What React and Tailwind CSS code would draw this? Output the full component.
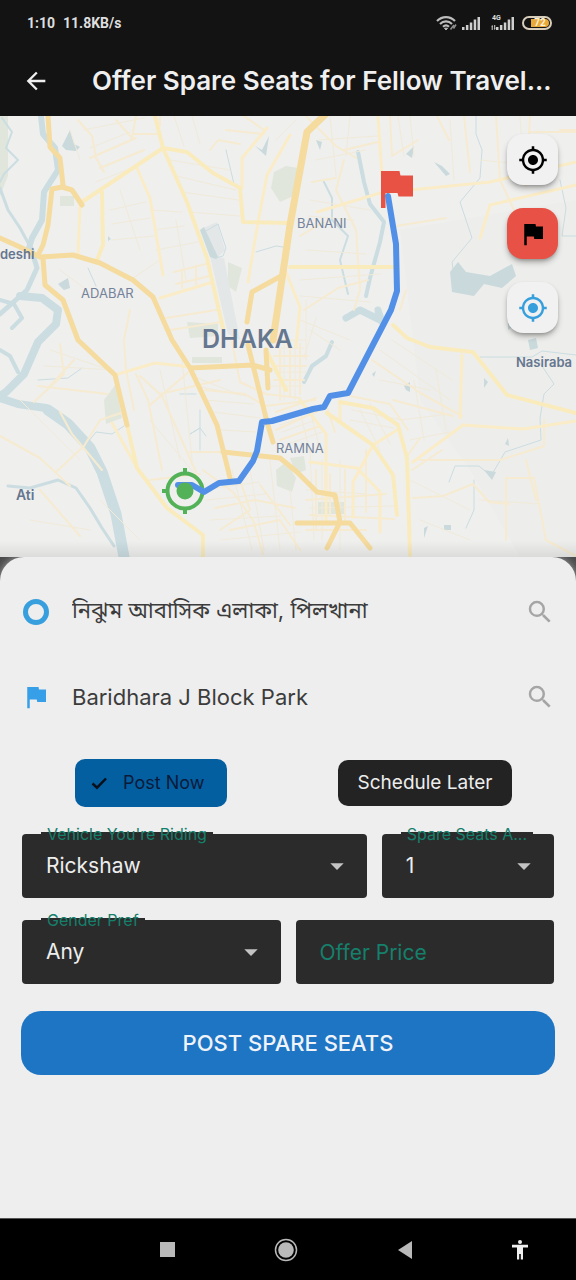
import React, { useState } from 'react';
import {
  MdAccessibility,
  MdArrowBack,
  MdArrowDropDown,
  MdFlag,
  MdMyLocation,
  MdSearch,
} from 'react-icons/md';

const SignalBars = () => (
  <svg viewBox="0 0 18 14" className="w-[18px] h-3.5" fill="#cfcfcf">
    <rect x="0" y="11" width="2.500" height="3" />
    <rect x="3.900" y="9" width="2.500" height="5" />
    <rect x="7.800" y="6.500" width="2.500" height="7.500" />
    <rect x="11.700" y="3.500" width="2.500" height="10.500" />
    <rect x="15.500" y="1" width="2.500" height="13" />
  </svg>
);

const StatusBar = () => (
  <div className="h-[45px] flex items-center justify-between pl-[27px] pr-6 text-[#dedede] font-[Roboto,sans-serif]">
    <div className="flex gap-2 text-sm font-bold">
      <span>1:10</span>
      <span>11.8KB/s</span>
    </div>
    <div className="flex items-center">
      {/* Wifi */}
      <svg viewBox="0 0 22 16" className="w-[22px] h-4" fill="none" stroke="#bdbdbd" strokeWidth="2.200">
        <path d="M1 6C6 .8 14 .8 19 6" />
        <path d="M4 9c3.400-3.400 8.600-3.400 12 0" />
        <path d="M7 11.800c1.800-1.600 4.200-1.600 6 0" />
        <path d="M8.500 13.200h3L10 15z" fill="#bdbdbd" strokeWidth="1" />
        <path d="M14.500 14.500l3.500-4.500M17.500 13.500l2.500-4" stroke="#8c8c8c" strokeWidth="1.600" />
      </svg>
      <div className="ml-1">
        <SignalBars />
      </div>
      <div className="relative ml-[11px] pl-[5px]">
        <SignalBars />
        <svg viewBox="0 0 5 5" className="absolute left-0 bottom-0 w-[5px] h-[5px]" fill="#cfcfcf">
          <path d="M1.200 0L2.200 1.500H1.700V5H.7V1.500H.2zM3.700 5L2.700 3.500h.5V0h1v3.500h.5z" />
        </svg>
        <span className="absolute left-px -top-0.5 text-[7px] leading-2 font-bold">4G</span>
      </div>
      <div className="ml-2 w-[30px] h-3.5 rounded-full border-2 border-[#d8cdbb] flex items-center p-px">
        <span className="ml-1.5 flex-1 h-full rounded-r-full bg-[#e9a83a] flex items-center justify-center text-[10px] font-bold text-[#fff1d2]">
          72
        </span>
      </div>
    </div>
  </div>
);

const CityMap = () => (
  <svg
    viewBox="0 116 576 441"
    preserveAspectRatio="xMidYMid slice"
    className="w-full h-full"
    fill="none"
    strokeLinecap="round"
    strokeLinejoin="round"
  >
    <rect x="0" y="0" width="576" height="700" fill="#efefee" />
    <path d="M400 230L576 200V557H520L470 470L420 400Z" fill="#ededeb" />

    {/* Parks */}
    <g fill="#e0e6dc">
      <path d="M274 172l12-6 12 2v26l-18 8-9-14z" />
      <path d="M187 322l31 2v12l-28 2zM192 357h30v6h-30zM60 196h14v10H60z" />
      <path d="M104 400l12-16 6 34-16 6zM276 470l10-8 10 16-4 14-15-6zM318 502h28v12h-28z" />
      <path d="M228 262l14 6-6 24-8-6zM290 458l14-2 2 14-10 4zM0 116h8v60l-8 20z" />
    </g>
    {/* Airfield */}
    <path d="M203 228l14-6 8 28-8 8zM210 256l14 2 16 82-12-6z" fill="#e3e7e7" />

    {/* Rivers */}
    <g stroke="#cbdde1">
      <path d="M41 116l2 18 12 14 3 22-14 22-2 28-10 18-3 10" strokeWidth="6" />
      <path d="M31 248l6 20-10 22-27 24" strokeWidth="5" />
      <path d="M20 296l22 2 16 12-2 14-18 18-14 32-18 18-6 4" strokeWidth="8" />
      <path d="M0 398l18 6 28 4 22 16 20 24" strokeWidth="8" />
      <path d="M48 410l20 14 22 24 12 24 14 42 8 43" strokeWidth="11" />
      <path d="M0 188l8 22 12 18 12 22" strokeWidth="3" />
      <path d="M0 300l14 4 8 14-10 10M0 350l10 6 8 16" strokeWidth="4" />
      <path d="M2 118l10 14-6 16 12 12-14 14-4 8" strokeWidth="2" />
      <path d="M8 486l22 2 28-8 18 8 14 20 12 20 12 18" strokeWidth="3" />
      <path d="M88 442l8-10 16 2 12-8M200 410v18l-10 6 10-6 6 8M200 428v22M180 394h16M38 380l30-2 14-10" strokeWidth="1" />
      <path d="M204 232l14-8 8 24-3 8-8 2M256 252l20-6 14 2M226 150l8 34M88 268l8 18" strokeWidth="1" />
      <path d="M358 152l6 30 6 22 14 18-4 20-10 36-4 18" strokeWidth="4" />
      <path d="M324 182l8 16v22l16 16-8 24 8 34M352 312l24 2" strokeWidth="2" />
      <path d="M346 318l14-8 20 10-2-10 4 12" strokeWidth="7" />
      <path d="M476 116v18l6 16-2 28-20 24 12 36-20 24 2 14M560 180l6 28-4 28h14" strokeWidth="1" />
      <path d="M304 382l8-16 14-10 6-14" strokeWidth="4" />
      <path d="M480 357h52l10-6 34 4M538 360l16 24-10 10-4 24 1 22-36 12-14 24-12-10h-24l-6 16M474 480v30l-8 18" strokeWidth="1" />
    </g>
    <g fill="#c9d9dc">
      <path d="M450 272l8-10 8 10 24 4 22-12 4 12-14 12-18-4-10 12-22-4z" />
      <path d="M62 146l8-16 4 14 6 3-4 4-10-1zM255 146l7 4 7-14-3 20zM200 230l4-3 14 30-2 2-6-2z" />
      <path d="M434 162l8 4 8 8-4 2zM404 386l6-4 0 10-4-2zM316 140l6 2-2 8zM528 340l8-2 2 10-8 2z" />
      <path d="M484 470l12 2-4 8zM508 438l-3 6 4 2zM424 528l4-2-4 12zM444 525h7v5h-7zM508 320l6 6-6 4z" />
      <path d="M406 154l8-8-2 12zM484 378l4 4-4 6zM372 374l4-3-2 6zM58 284l10-6 2 10-6 2zM108 236l3 3-3 2z" />
    </g>

    {/* Lanes */}
    <g stroke="#f1ead8" strokeWidth="1">
      <path d="M84 130l60-12M90 148l40-16M96 182l36-14M110 210l36-8M112 224l38-6M112 240l42-4M150 210l32 2M154 230l30-4M156 250l42-8" />
      <path d="M170 160l60 10M176 176l60 14M182 192l56 8M190 212l50 4M174 116l10 30M192 116l8 28M296 120l-20 20M318 140l60-4" />
      <path d="M316 160l50-10M310 200l60 10M308 216l46 4M306 250l60 4M300 280l80-6M300 296l70 6M330 116l6 60M350 116l-4 40" />
      <path d="M190 375l50 20M196 386l50 10M204 400l50 4M214 412l46 6M220 430l36 2M182 360l10 100M160 370l20 90M150 420l50 60" />
      <path d="M276 340h30M276 348h28M274 372h32M272 386h30M284 340v60M295 340v60M306 300v60M310 330l30 20M300 320l50 20M316 318l-12 40" />
      <path d="M280 425l30-10M282 432l34-12M284 438l30-10M288 444l34-12M300 412l10 40M310 410l10 40M200 490l60-8M206 500l60-6M210 520l70-4" />
      <path d="M220 540l80-8M232 470l20 80M250 470l14 80M270 460l10 90M290 490l6 60M310 450l4 90M322 460v80M340 460v90M360 410l20 40M370 404l20 40" />
      <path d="M306 490l60 4M310 508l84-2M352 410l50 10M350 420l44 8M20 400l60 60M30 520l60 10M50 350l60 20M44 366l70 4M100 500l40 40M380 350l70 50" />
      <path d="M392 340l60 40M380 380l50 10M400 420l50-6M410 440l40-8M414 380l10 60M436 370l10 60M398 116l6 40M410 116l4 40M450 120l4 60M480 160l40 4" />
      <path d="M520 116l4 60M540 140l4 40M410 480l60 30M420 520l50 20M480 500l60 4M70 130l10 30M130 280l30-20M120 190l20 60M176 220l10 60M60 270l40 30" />
    </g>

    {/* Small streets */}
    <g stroke="#f6ebd0" strokeWidth="2">
      <path d="M78 120l14 16 4 22 8 14M116 120l16 18 4-22M134 134h26M90 158l46-20M100 168l44-18" />
      <path d="M210 150l8-10 22 4M226 130l38 4M160 116v10M244 116l20 14" />
      <path d="M174 272l32-8M176 284l34-8M182 270v18M196 266v18M166 318l50-8M170 330l52-8" />
      <path d="M130 310l-6 30 2 30 8 40M60 344l4 30-30 28M38 386l70 8M74 360l-24 26" />
      <path d="M124 412l-24 8-16 26-28 26M60 412l12 22 30 36M0 436l40 22 30 28M40 490l40 46" />
      <path d="M136 374l12 26 14 70M140 376l22 20 34 76M150 405l40-34M160 394l60-14" />
      <path d="M232 342l8 40 26 12 34 4M280 350v50M290 340v56M300 344v50M274 356h34M272 366h34M274 380h30M276 412l40-14" />
      <path d="M205 390l40 4 20 12 50-6M276 430l44-20M280 440l40-14M275 422l30-10" />
      <path d="M203 470l30 22 20 28 10 34M215 508l40-8 40 8M240 480l10 30-30 20M260 485l30 40M230 530l50-10 20 30" />
      <path d="M306 116l30 30 20 12M344 150l34-8M390 116l2 40 26-16M437 116l12 24M464 116l6 56M496 116l4 64 28 60" />
      <path d="M344 160l-8 30 20 40 4 60-6 20M312 182l24-4M300 236l24-14M304 310l34-22 30-8M400 310l6-20M372 360l50 34 40 22" />
      <path d="M316 470v60M330 474v40M345 470v50M306 500l80-6M310 515l84 4M306 530h60M366 450v62M325 402l10 30M350 396l40 8 18 26" />
      <path d="M413 498l30-2 30-12 16 18 20 2M506 540v-62h28l12 62 30 16M526 460l10 40M420 438l-14 20M420 460h80l44-14v-26M530 116l-4 70M560 130h16" />
      <path d="M530 132h46M396 226l50-8M393 400l60 16M412 470l30-20M190 452h34M150 480l50-6" />
    </g>

    {/* Secondary roads */}
    <g stroke="#faecc6" strokeWidth="3">
      <path d="M80 205l-2 50M137 168l13 30 13 77M267 128l-25 30v30M290 135l-23 40-10 53-9 54" />
      <path d="M160 298l53-16M378 116l4 60M317 212l63-19 110-11 86-20M480 238l10-33 86-20M284 267l16 40-4 40" />
      <path d="M462 355l-2 63M413 462l50-37 60 4 53-8M310 462l47 6 23 24v40M397 430l-24 15-20 37v35" />
      <path d="M115 375l40-12 36 4M137 468l-25-45M340 402v20M300 400l26 34 0 90" />
    </g>
    <g stroke="#faebbd" strokeWidth="4">
      <path d="M155 116l8 32 24 54 20 56 10 44 6 26" />
      <path d="M82 202l81-54 24 4 26 21 27 15 3 34 47 1" />
      <path d="M102 192l1 53-6 15M290 267h103M393 325l14 13 23 9 43 5 34 43 69 18" />
      <path d="M340 402l33 6 25 17 9 33 3 97M327 413l46 32 20 30 4 40" />
      <path d="M127 425l10 43 30 40 36 27v22M286 390l-20-40" />
    </g>

    {/* Highways */}
    <g stroke="#f5db9e" strokeWidth="5">
      <path d="M48 116l2 31 10 11 3 27M82 205l-10-15-10-3-10 2-4 36-5 20-5 10" />
      <path d="M0 238l20 9 20 10 33-2 27 8 33 17 20 17 19 43 18 28 27 57 13 53" />
      <path d="M43 258l2 27 18 15 15 40 37 35 12 50" />
      <path d="M330 110l-23 22-17 93-17 115" strokeWidth="7" />
      <path d="M283 275l-31 17-5 30M248 345l19 77 6 20M190 368l63-3 17 5M266 350l2 38" />
      <path d="M223 452l57 6 17 14 20 20 18 3 5 27-13 26M297 523l53 0 20 25" />
    </g>

    {/* Place names */}
    <g fill="#74839a" fontFamily="Inter, sans-serif" fontSize="13">
      <text x="297" y="228">BANANI</text>
      <text x="81" y="298">ADABAR</text>
      <text x="276" y="453">RAMNA</text>
      <g fill="#65768f" fontWeight="600">
        <text x="0" y="259">deshi</text>
        <text x="16" y="500" fontSize="14">Ati</text>
        <text x="516" y="367">Nasiraba</text>
        <text x="202" y="348" fontSize="25">DHAKA</text>
      </g>
    </g>

    {/* Destination and origin markers with the route between them */}
    <path d="M400 173.500L399.500 171H381v37h4.500v-15h12l1 3.500H413v-21h-12.500z" fill="#e85244" />
    <g stroke="#53b257" strokeWidth="4" strokeLinecap="butt">
      <circle cx="185" cy="491" r="17.500" />
      <path d="M185 468v7M185 507v7M162 491h7M201 491h7" />
    </g>
    <path
      d="M178 485h14l12 7 15-9 20-2 14-20 4-10 5-29 10-1 41-12 11-2 6-11 18-3 43-83 6-19-1-47-8-48"
      stroke="#5290e8"
      strokeWidth="6"
    />
    <circle cx="185" cy="491" r="8.500" fill="#53b257" />
  </svg>
);

const MapButton = ({ label, className, children }) => (
  <button
    type="button"
    aria-label={label}
    className={`w-[51px] h-[51px] rounded-2xl flex items-center justify-center shadow-md shadow-black/30 ${className}`}
  >
    {children}
  </button>
);

const PlaceField = ({ id, label, icon, value, onChange }) => (
  <div className="h-12 flex items-center pl-[22px] pr-[21px]">
    <span className="w-7 flex justify-center">{icon}</span>
    <input
      id={id}
      type="text"
      aria-label={label}
      value={value}
      onChange={(e) => onChange(e.target.value)}
      className="ml-[22px] flex-1 min-w-0 h-12 bg-transparent text-[22px] text-[#3c3c3c] focus:outline-none"
    />
    <button type="button" aria-label={`Search ${label}`}>
      <MdSearch className="w-[30px] h-[30px] text-[#a5a5a5]" />
    </button>
  </div>
);

const SelectField = ({ id, label, options, className = '' }) => (
  <div className={`relative min-w-0 ${className}`}>
    <select
      id={id}
      className="w-full h-16 pl-6 pr-12 appearance-none rounded-sm bg-[#2b2b2b] text-[21px] text-[#ededed] focus:outline-none"
    >
      {options.map((option) => (
        <option key={option}>{option}</option>
      ))}
    </select>
    <label
      htmlFor={id}
      className="absolute left-[19px] -top-0.5 h-1 px-1.5 flex items-center bg-[#2b2b2b] text-base text-[#15806c] whitespace-nowrap"
    >
      {label}
    </label>
    <MdArrowDropDown className="absolute right-3.5 top-4 w-8 h-8 text-[#c4c4c4] pointer-events-none" />
  </div>
);

export default function App() {
  const [origin, setOrigin] = useState('নিঝুম আবাসিক এলাকা, পিলখানা');
  const [destination, setDestination] = useState('Baridhara J Block Park');
  const [price, setPrice] = useState('');

  return (
    <div className="min-h-screen flex flex-col bg-[#eeeeee] font-[Inter,'Noto_Sans_Bengali','Noto_Sans',sans-serif]">
      <header className="bg-[#131313]">
        <StatusBar />
        <div className="h-[71px] flex items-center pl-[22px] pr-5 text-[#efefef]">
          <button type="button" aria-label="Back">
            <MdArrowBack className="w-7 h-7" />
          </button>
          <h1 className="ml-[42px] text-[26px] font-semibold whitespace-nowrap">
            Offer Spare Seats for Fellow Travel...
          </h1>
        </div>
      </header>

      {/* Map */}
      <div className="relative flex-1 basis-0 min-h-80 overflow-hidden">
        <div className="absolute inset-0">
          <CityMap />
        </div>
        <div className="absolute inset-x-0 bottom-0 h-4 bg-linear-to-t from-black/8 to-transparent" />
        <div className="absolute top-[18px] right-[18px] flex flex-col gap-[23px]">
          <MapButton label="Pick start point" className="bg-[#f1f1f1] text-black">
            <MdMyLocation className="w-[30px] h-[30px]" />
          </MapButton>
          <MapButton label="Pick destination" className="bg-[#e85145] text-black">
            <MdFlag className="w-[30px] h-[30px]" />
          </MapButton>
          <MapButton label="Current location" className="bg-[#f1f1f1] text-[#369fdc]">
            <MdMyLocation className="w-[30px] h-[30px]" />
          </MapButton>
        </div>
      </div>

      {/* Trip form */}
      <main className="bg-[#4a4a4a]">
        <form
          onSubmit={(e) => e.preventDefault()}
          className="rounded-t-3xl bg-[#eeeeee] pt-[31px] pb-[143px] shadow-[0_0_8px_rgba(255,255,255,0.5)]"
        >
          <div className="flex flex-col gap-[37px]">
            <PlaceField
              id="origin"
              label="Start"
              icon={<span className="w-[26px] h-[26px] rounded-full border-5 border-[#379fdd]" />}
              value={origin}
              onChange={setOrigin}
            />
            <PlaceField
              id="destination"
              label="Destination"
              icon={<MdFlag className="w-[30px] h-[30px] shrink-0 text-[#379fe8]" />}
              value={destination}
              onChange={setDestination}
            />
          </div>

          <div className="mt-[38px] px-3.5 grid grid-cols-2 justify-items-center items-center">
            <button
              type="button"
              aria-pressed="true"
              className="w-[152px] h-12 rounded-[10px] bg-[#035f9f] flex items-center pl-3.5 text-lg text-[#0b1a3a]"
            >
              <svg viewBox="0 0 20 20" className="w-5 h-5 mr-3.5" fill="none" stroke="#0a0f1c" strokeWidth="2.500">
                <path d="M3.500 10.500l4.500 4.200 9-9.200" />
              </svg>
              Post Now
            </button>
            <button
              type="button"
              className="w-[174px] h-[46px] rounded-[10px] bg-[#232323] text-[19px] text-[#ededed]"
            >
              Schedule Later
            </button>
          </div>

          <div className="mt-[27px] px-[22px] flex flex-col gap-[22px]">
            <div className="flex gap-[15px]">
              <SelectField
                id="vehicle"
                label="Vehicle You're Riding"
                options={['Rickshaw', 'CNG', 'Car']}
                className="flex-2"
              />
              <SelectField
                id="seats"
                label="Spare Seats A..."
                options={['1', '2', '3']}
                className="flex-1"
              />
            </div>
            <div className="grid grid-cols-2 gap-[15px]">
              <SelectField
                id="gender"
                label="Gender Pref"
                options={['Any', 'Male', 'Female']}
              />
              <input
                type="text"
                inputMode="numeric"
                aria-label="Offer Price"
                placeholder="Offer Price"
                value={price}
                onChange={(e) => setPrice(e.target.value)}
                className="w-full h-16 px-6 rounded-sm bg-[#2b2b2b] text-[21px] text-[#ededed] placeholder:text-[#15806c] focus:outline-none"
              />
            </div>
          </div>

          <div className="mt-[27px] px-[21px]">
            <button
              type="submit"
              className="w-full h-16 rounded-[20px] bg-[#1e75c4] text-[22px] font-medium text-[#f0f3f7]"
            >
              POST SPARE SEATS
            </button>
          </div>
        </form>
      </main>

      {/* System navigation */}
      <nav className="h-[62px] bg-black border-t border-[#555555] grid grid-cols-[108px_1fr_1fr_1fr_112px] items-center justify-items-center text-[#b9b9b9]">
        <span />
        <button type="button" aria-label="Recent apps" className="w-[15px] h-[15px] bg-[#b9b9b9]" />
        <button type="button" aria-label="Home">
          <svg viewBox="0 0 24 24" className="w-6 h-6">
            <circle cx="12" cy="12" r="10.500" fill="none" stroke="currentColor" strokeWidth="1.500" />
            <circle cx="12" cy="12" r="7.800" fill="currentColor" />
          </svg>
        </button>
        <button type="button" aria-label="Back">
          <svg viewBox="0 0 14 18" className="w-3.5 h-[18px]">
            <path d="M14 0v18L0 9z" fill="currentColor" />
          </svg>
        </button>
        <button type="button" aria-label="Accessibility">
          <svg viewBox="0 0 18 20" className="w-[18px] h-5" fill="#efefef">
            <circle cx="9" cy="2" r="2" />
            <path d="M1 4.800h16v2.700h-5V19.500H9.800V14H8.200v5.500H6V7.500H1z" />
          </svg>
        </button>
      </nav>
    </div>
  );
}
